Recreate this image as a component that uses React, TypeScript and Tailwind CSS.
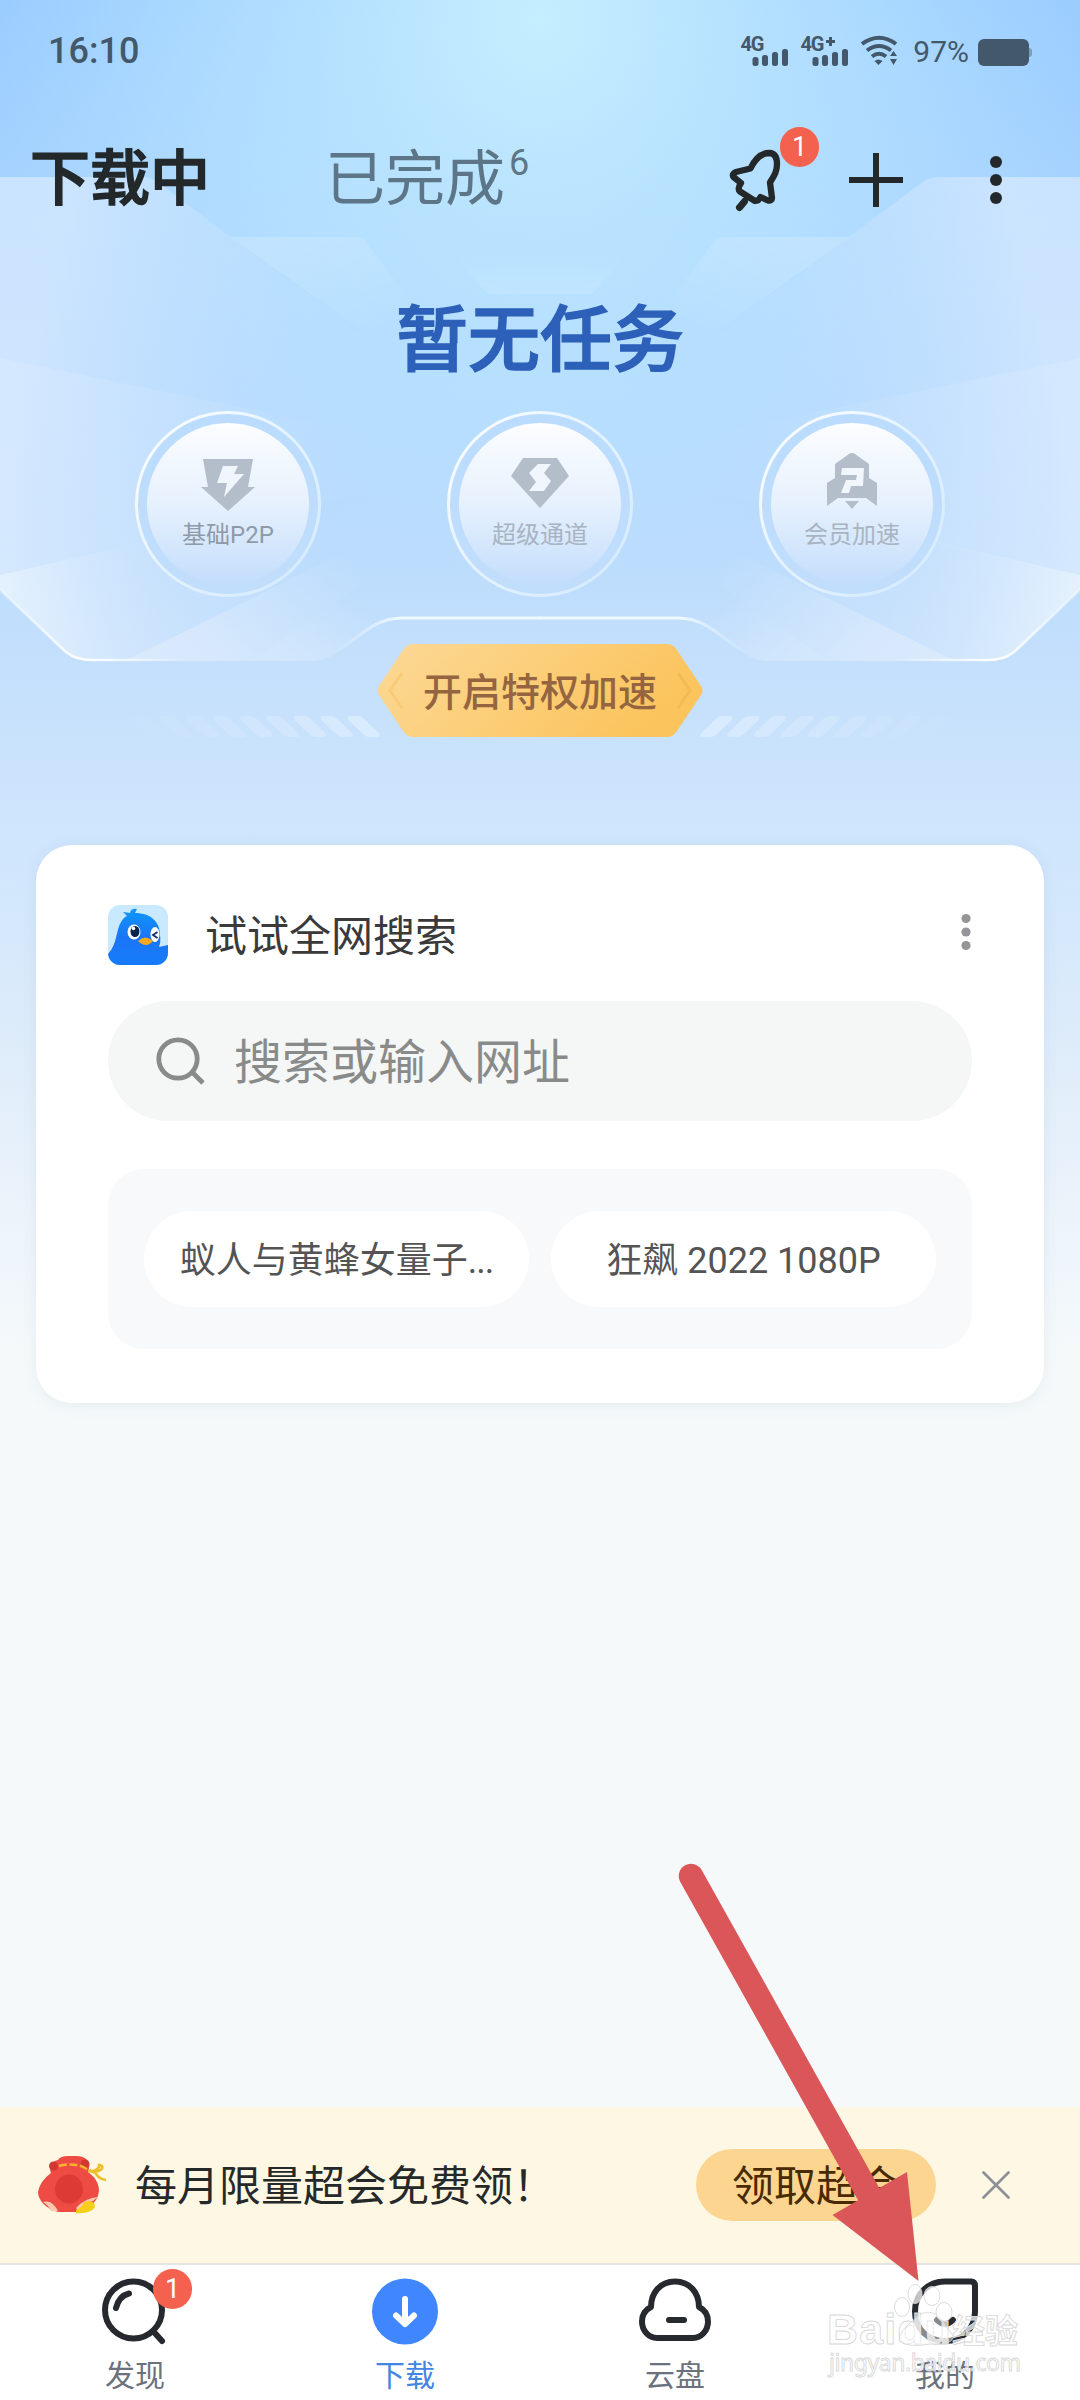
import React from "react";

const INK = "#23282b";

const HeroBackdrop: React.FC = () => {
  const half = (
    <>
      <path d="M0 177H143Q152 177 160 184L420 378L330 500L0 575Z" fill="url(#wing)" />
      <path d="M230 237H355Q362 237 366 242L440 340L413 366Z" fill="url(#fin)" />
      <path d="M448 250H540V294H492Q487 294 484 290Z" fill="url(#roof)" />
      <path d="M0 358L380 436L380 490L0 575Z" fill="url(#beam)" />
      <path
        d="M0 575L380 488L540 520V618H398C375 618 362 636 335 654Q324 661 312 661H92Q76 661 66 652L0 590Z"
        fill="url(#floor)"
      />
      <path d="M125 661L390 530V565L250 661Z" fill="url(#ray)" />
      <path d="M250 661L390 565V618C375 620 362 636 335 654Q324 661 312 661Z" fill="url(#lip)" />
      <path d="M0 590L66 652Q76 660 92 660H190" fill="none" stroke="url(#edge)" strokeWidth="2.6" />
      <path
        d="M335 653C362 635 375 618 402 618H541"
        fill="none"
        stroke="url(#edgeTop)"
        strokeWidth="3"
      />
    </>
  );

  return (
    <svg className="absolute left-0 top-0" width="1080" height="800" viewBox="0 0 1080 800">
      <defs>
        <linearGradient id="wing" gradientUnits="userSpaceOnUse" x1="40" y1="330" x2="400" y2="420">
          <stop offset="0" stopColor="#d9eaff" stopOpacity="0.7" />
          <stop offset="1" stopColor="#b9dcff" stopOpacity="0" />
        </linearGradient>
        <linearGradient id="fin" gradientUnits="userSpaceOnUse" x1="300" y1="237" x2="350" y2="345">
          <stop offset="0" stopColor="#ffffff" stopOpacity="0.18" />
          <stop offset="1" stopColor="#ffffff" stopOpacity="0" />
        </linearGradient>
        <linearGradient id="roof" x1="0" y1="0" x2="0" y2="1">
          <stop offset="0" stopColor="#ffffff" stopOpacity="0" />
          <stop offset="1" stopColor="#ffffff" stopOpacity="0.13" />
        </linearGradient>
        <linearGradient id="beam" gradientUnits="userSpaceOnUse" x1="0" y1="0" x2="380" y2="0">
          <stop offset="0" stopColor="#e0edff" stopOpacity="0.35" />
          <stop offset="1" stopColor="#d7e9ff" stopOpacity="0" />
        </linearGradient>
        <linearGradient id="floor" gradientUnits="userSpaceOnUse" x1="0" y1="600" x2="330" y2="560">
          <stop offset="0" stopColor="#eff7fe" stopOpacity="0.8" />
          <stop offset="0.5" stopColor="#d6e8fd" stopOpacity="0.4" />
          <stop offset="1" stopColor="#cfe5fd" stopOpacity="0" />
        </linearGradient>
        <linearGradient id="ray" gradientUnits="userSpaceOnUse" x1="210" y1="661" x2="340" y2="540">
          <stop offset="0" stopColor="#e3eefd" stopOpacity="0.55" />
          <stop offset="1" stopColor="#d8eafd" stopOpacity="0" />
        </linearGradient>
        <linearGradient id="lip" gradientUnits="userSpaceOnUse" x1="300" y1="665" x2="355" y2="600">
          <stop offset="0" stopColor="#dfedfd" stopOpacity="0.5" />
          <stop offset="1" stopColor="#dfedfd" stopOpacity="0" />
        </linearGradient>
        <linearGradient id="edge" gradientUnits="userSpaceOnUse" x1="0" y1="0" x2="190" y2="0">
          <stop offset="0" stopColor="#fff" stopOpacity="0.3" />
          <stop offset="0.45" stopColor="#fff" />
          <stop offset="1" stopColor="#fff" stopOpacity="0" />
        </linearGradient>
        <linearGradient id="edgeTop" gradientUnits="userSpaceOnUse" x1="335" y1="0" x2="400" y2="0">
          <stop offset="0" stopColor="#eef8ff" stopOpacity="0" />
          <stop offset="1" stopColor="#eef8ff" />
        </linearGradient>
      </defs>
      {half}
      <g transform="matrix(-1 0 0 1 1080 0)">{half}</g>
      {Array.from({ length: 10 }, (_, i) => (
        <g key={i} fill="#dcecfe" fillOpacity={0.85 * Math.pow(1 - i / 10, 1.3)}>
          <path
            transform={`translate(${-26.8 * i} 0)`}
            d="M350 716H358Q361 716 363 718L379 733Q381 737 377 737H370Q366 737 364 735L348 720Q346 716 350 716Z"
          />
          <path
            transform={`translate(${26.8 * i} 0)`}
            d="M730 716H722Q719 716 717 718L701 733Q699 737 703 737H710Q714 737 716 735L732 720Q734 716 730 716Z"
          />
        </g>
      ))}
    </svg>
  );
};

const SignalBars: React.FC<{ plus?: boolean }> = ({ plus }) => (
  <svg width="48" height="32" viewBox="0 0 48 32" fill="#43586a">
    <text x="0.5" y="16" fontSize="20" fontWeight="700" fontFamily="Roboto, sans-serif" textLength="24">
      4G
    </text>
    {plus && <path d="M26 5h3V2h3v3h3v3h-3v3h-3V8h-3z" />}
    <rect x="12.5" y="22" width="6" height="9" rx="2.5" />
    <rect x="22" y="20" width="6" height="11" rx="2.5" />
    <rect x="32" y="17" width="6" height="14" rx="2.5" />
    <rect x="42" y="14" width="6" height="17" rx="2.5" />
  </svg>
);

const StatusBar: React.FC = () => (
  <div className="relative flex h-[102px] shrink-0 items-center pl-[48px] pr-[48px] text-[#43586a]">
    <span className="text-[36px] font-medium leading-none">16:10</span>
    <div className="ml-auto flex items-center">
      <SignalBars />
      <div className="w-[12px]" />
      <SignalBars plus />
      <svg className="ml-[12px]" width="38" height="32" viewBox="0 0 38 32" fill="none" stroke="#43586a" strokeWidth="4">
        <path d="M2 9Q19 -3.5 36 9" />
        <path d="M7 15.5Q19 6.500 31 15.500" />
        <path d="M12 21.5Q19 16 26 21.500" />
        <path d="M14.500 26Q18.500 23 22.500 26L18.500 30Z" fill="#43586a" stroke="none" />
        <path d="M30 21l3.500-5 3.500 5zM30 24l3.500 6 3.500-6z" fill="#43586a" stroke="none" />
      </svg>
      <span className="ml-[15px] pt-[2px] text-[30px] leading-none">97%</span>
      <div className="ml-[9px] mt-[2px] h-[27px] w-[51px] rounded-[6px] bg-[#43586a]" />
      <div className="mt-[2px] h-[9px] w-[3px] rounded-r-sm bg-[#7b9cbd]" />
    </div>
  </div>
);

const Badge: React.FC<{ className: string }> = ({ className }) => (
  <span
    className={`absolute flex h-[40px] w-[39px] items-center justify-center rounded-full bg-[#f5614f] text-[27px] leading-none text-white ${className}`}
  >
    1
  </span>
);

const Header: React.FC = () => (
  <div className="relative flex h-[156px] shrink-0 items-center pl-[30px] pr-[78px]">
    <h1 className="text-[60px] font-medium leading-none text-[#23282b] [-webkit-text-stroke:1.500px_#23282b]">下载中</h1>
    <div className="ml-[115px] flex items-center text-[#5d7687]">
      <span className="text-[60px] leading-none">已完成</span>
      <span className="mb-[34px] ml-[4px] text-[36px] leading-none">6</span>
    </div>
    <div className="ml-auto flex items-center">
      <div className="relative">
        <svg width="54" height="66" viewBox="0 0 54 66" fill="none" stroke={INK} strokeWidth="6.300" strokeLinejoin="round" strokeLinecap="round">
          <path d="M21.500 21.500C26 12 33 6 40.500 6Q48 6.500 48 17C48 25 45 29 41 35.500L43 51Q43 54 39 53.500L31.500 50L29 53.500L26 54L11 44.500Q8 42 12 36L4.500 30Q2.500 27 7 25Z" />
          <path d="M15.500 54.500L10.500 60.500" strokeWidth="7" />
        </svg>
        <Badge className="-top-[20px] left-[51px]" />
      </div>
      <svg className="ml-[66px]" width="54" height="54" viewBox="0 0 54 54" stroke={INK} strokeWidth="6">
        <path d="M27 0V54M0 27H54" />
      </svg>
      <svg className="ml-[87px]" width="12" height="48" viewBox="0 0 12 48" fill={INK}>
        <circle cx="6" cy="6" r="6" />
        <circle cx="6" cy="24" r="6" />
        <circle cx="6" cy="42" r="6" />
      </svg>
    </div>
  </div>
);

const boosts = [
  {
    label: "基础P2P",
    tone: "text-[#8f9aa8]",
    icon: (
      <>
        <path d="M5 6H55L50 34H57L30 58L3 34H10Z" />
        <path d="M25 13H40L36 21H46L26 44L29 30H19Z" fill="#f1f6fd" />
      </>
    ),
  },
  {
    label: "超级通道",
    tone: "text-[#a9b4c2]",
    icon: (
      <>
        <path d="M13 5H47L59 23L30 55L1 23Z" />
        <path d="M28 11H41L34 20L41 28L34 38H19L26 29L19 20Z" fill="#f1f6fd" />
      </>
    ),
  },
  {
    label: "会员加速",
    tone: "text-[#a9b4c2]",
    icon: (
      <>
        <path d="M27 1Q30 -1 33 1L47 11V25L55 30V53L44 45H16L5 53V30L13 25V11Z" />
        <path d="M20 15H42L41 33H29L27 40H19L24 27H34L35 22H19Z" fill="#f1f6fd" />
        <path d="M23 48H37L30 56Z" />
      </>
    ),
  },
];

const BoostCircles: React.FC = () => (
  <div className="relative flex h-[186px] shrink-0 justify-center gap-[126px]">
    {boosts.map((b) => (
      <div
        key={b.label}
        className="h-[186px] w-[186px] rounded-full bg-linear-to-br from-white via-[#e3f2ff] to-[#d3eaff] p-[3px]"
      >
        <div className="flex h-full w-full items-center justify-center rounded-full bg-linear-to-b from-[#bbdcfe] to-[#c1defc]">
          <div className="flex h-[162px] w-[162px] flex-col items-center rounded-full bg-linear-to-b from-[#fcfdff] via-[#e6f1fd] to-[#c3ddfc] pt-[30px]">
            <svg width="60" height="58" viewBox="0 0 60 58" fill="#b4becb">
              {b.icon}
            </svg>
            <span className={`mt-[12px] text-[24px] leading-none ${b.tone}`}>{b.label}</span>
          </div>
        </div>
      </div>
    ))}
  </div>
);

const BoostButton: React.FC = () => (
  <button className="relative mx-auto mt-[47px] flex h-[93px] w-[328px] shrink-0 items-center justify-center">
    <svg className="absolute inset-0" width="328" height="93" viewBox="0 0 328 93" fill="none">
      <defs>
        <linearGradient id="gold" x1="0" y1="0" x2="1" y2="0.3">
          <stop offset="0" stopColor="#fcd997" />
          <stop offset="1" stopColor="#fbc45d" />
        </linearGradient>
      </defs>
      <path
        d="M37 0H291Q297 0 301 6L325 42Q328 46.500 325 51L301 87Q297 93 291 93H37Q31 93 27 87L3 51Q0 46.500 3 42L27 6Q31 0 37 0Z"
        fill="url(#gold)"
      />
      <path d="M26 29L14 46.500L26 64" stroke="#f9cb76" strokeWidth="3" />
      <path d="M302 29L314 46.500L302 64" stroke="#f3bb55" strokeWidth="3" />
    </svg>
    <span className="relative pt-[5px] text-[39px] font-medium leading-none text-[#946540]">开启特权加速</span>
  </button>
);

const SearchCard: React.FC = () => (
  <div className="relative mx-[36px] mt-[108px] flex h-[558px] shrink-0 flex-col rounded-[36px] bg-white px-[72px] pt-[60px] shadow-[0_2px_16px_rgba(80,110,140,0.09)]">
    <div className="flex h-[60px] items-center">
      <svg width="60" height="60" viewBox="0 0 60 60">
        <defs>
          <clipPath id="tile">
            <rect width="60" height="60" rx="12" />
          </clipPath>
          <linearGradient id="bird" x1="0" y1="0" x2="0" y2="1">
            <stop offset="0" stopColor="#0c97fb" />
            <stop offset="0.5" stopColor="#1b76f6" />
            <stop offset="1" stopColor="#167bfa" />
          </linearGradient>
        </defs>
        <g clipPath="url(#tile)">
          <rect width="60" height="60" fill="#c8e9fe" />
          <path
            d="M0 49C9 40 8 25 13 17Q16 12 19 11L15 7L22 8Q23 3 29 4L27 8C43 8 52 17 52 30Q53 37 51 42L60 40V60H0Z"
            fill="url(#bird)"
          />
          <ellipse cx="26" cy="27" rx="6.500" ry="7.500" fill="#fff" />
          <ellipse cx="27" cy="26.500" rx="4.500" ry="5.500" fill="#06244d" />
          <circle cx="25.500" cy="23.500" r="1.800" fill="#fff" />
          <ellipse cx="47" cy="29.500" rx="4.500" ry="7.500" fill="#fff" />
          <path d="M49.500 27L45 30L49.500 33" fill="none" stroke="#12305c" strokeWidth="1.800" />
          <path d="M30 36Q37 29 45 36Q38 44 30 36Z" fill="#f6a91b" />
        </g>
      </svg>
      <span className="ml-[37px] pt-[4px] text-[42px] leading-none text-[#3a3a3a]">试试全网搜索</span>
      <svg className="mb-[6px] ml-auto" width="12" height="38" viewBox="0 0 12 38" fill="#939598">
        <circle cx="6" cy="5.500" r="4.600" />
        <circle cx="6" cy="19" r="4.600" />
        <circle cx="6" cy="32.500" r="4.600" />
      </svg>
    </div>
    <div className="mt-[36px] flex h-[120px] items-center rounded-full bg-[#f5f7f7] pl-[48px]">
      <svg width="50" height="50" viewBox="0 0 50 50" fill="none" stroke="#888b89" strokeWidth="4.800">
        <circle cx="22" cy="23" r="19.200" />
        <path d="M36 36L47 47" />
      </svg>
      <span className="ml-[28px] pt-[3px] text-[48px] leading-none text-[#898b8a]">搜索或输入网址</span>
    </div>
    <div className="mt-[48px] flex h-[180px] items-center gap-[22px] rounded-[36px] bg-[#f8f9fb] px-[36px] text-[36px] text-[#545454]">
      <div className="flex h-[96px] flex-1 items-center justify-center rounded-full bg-white pt-[4px] leading-none">
        蚁人与黄蜂女量子<span className="font-['Roboto'] tracking-[-1px]">...</span>
      </div>
      <div className="flex h-[96px] flex-1 items-center justify-center rounded-full bg-white pt-[4px] leading-none">
        狂飙 2022 1080P
      </div>
    </div>
  </div>
);

const Banner: React.FC = () => (
  <div className="relative flex h-[158px] shrink-0 items-center border-b-2 border-[#e3e5e1] bg-[#fef7e3] pl-[38px] pr-[70px]">
    <svg width="70" height="60" viewBox="0 0 70 60">
      <path d="M20 5Q22 1 30 1H38Q46 1 49 5Q53 9 50 17C57 22 61 28 61 36Q60 46 51 52L44 57H20C8 54 0 45 0 37Q2 26 13 18Q9 8 20 5Z" fill="#ee4b44" />
      <circle cx="15.500" cy="11" r="4.500" fill="#d23832" />
      <circle cx="47" cy="9" r="4.500" fill="#d23832" />
      <ellipse cx="31" cy="34" rx="14" ry="14.500" fill="#de3a35" />
      <path d="M21 11Q32 8 43 11L57 18" fill="none" stroke="#f7b42c" strokeWidth="2.500" strokeDasharray="8 2.500" />
      <path d="M50 16Q58 17 61 12Q60 8 64 11Q66 15 57 17Q60 24 68 25" fill="none" stroke="#ebc02d" strokeWidth="2.600" />
      <path d="M5 47Q14 44 20 56L13 56Q10 50 5 47ZM38 53Q47 43 60 42L55 46Q46 47 41 57Z" fill="#f8c9ae" />
      <path d="M38 55Q45 52 46 47Q57 44 57 52Q53 59 38 58Z" fill="#f7cf19" />
    </svg>
    <span className="ml-[27px] pt-[4px] text-[42px] leading-none text-[#26292a]">每月限量超会免费领！</span>
    <div className="ml-auto flex items-center">
      <button className="flex h-[72px] w-[240px] items-center justify-center rounded-full bg-[#fcd690] pt-[3px] text-[42px] leading-none text-[#4a2a02]">
        领取超会
      </button>
      <svg className="ml-[46px]" width="28" height="28" viewBox="0 0 28 28" stroke="#8b9097" strokeWidth="2.600" strokeLinecap="round">
        <path d="M1.500 1.500L26.500 26.500M26.500 1.500L1.500 26.500" />
      </svg>
    </div>
  </div>
);

const tabs = [
  {
    label: "发现",
    color: "text-[#6b727d]",
    badge: true,
    icon: (
      <>
        <circle cx="34.500" cy="34" r="28.500" />
        <path d="M54 55L63 65M17 32Q20 20 30 17.500" />
      </>
    ),
  },
  {
    label: "下载",
    color: "text-[#4385e2]",
    icon: (
      <>
        <circle cx="36" cy="35.500" r="33" fill="#4086ff" stroke="none" />
        <path d="M36 23V48M27 39.500L36 48L45 39.500" stroke="#fff" />
      </>
    ),
  },
  {
    label: "云盘",
    color: "text-[#6b727d]",
    icon: (
      <>
        <path d="M12 31C12 17 21 5.500 36 5.500S60 17 60 31C66 34 69 39 69 45.500C69 55 62 62 54 62H18C10 62 3 55 3 45.500C3 39 6 34 12 31Z" />
        <path d="M30 44H45" />
      </>
    ),
  },
  {
    label: "我的",
    color: "text-[#6b727d]",
    icon: (
      <>
        <path d="M36 5.500H62Q66 5.500 66 10V35.500C66 53 53 65 36 65S6 53 6 35.500S19 5.500 36 5.500Z" />
        <path d="M28 44Q36 52 44 44" />
      </>
    ),
  },
];

const TabBar: React.FC = () => (
  <div className="grid h-[135px] shrink-0 grid-cols-4 bg-white">
    {tabs.map((t) => (
      <div key={t.label} className={`flex flex-col items-center pt-[11px] ${t.color}`}>
        <div className="relative">
          <svg width="72" height="70" viewBox="0 0 72 70" fill="none" stroke="#262a2e" strokeWidth="6" strokeLinecap="round" strokeLinejoin="round">
            {t.icon}
          </svg>
          {t.badge && <Badge className="-top-[7px] left-[54px]" />}
        </div>
        <span className="mt-[15px] text-[30px] leading-none">{t.label}</span>
      </div>
    ))}
  </div>
);

const Watermark: React.FC = () => (
  <svg
    className="absolute bottom-[14px] right-[54px]"
    width="206"
    height="110"
    viewBox="820 2276 206 110"
    fill="#fff"
    fillOpacity="0.72"
    stroke="#d8d8d8"
    strokeWidth="0.9"
  >
    <text x="827" y="2344" fontSize="43" fontWeight="700" fontFamily="Liberation Sans, sans-serif" textLength="124">
      Baidu
    </text>
    <text x="952" y="2343" fontSize="33" fontWeight="700" fontFamily="Noto Sans CJK SC, sans-serif">
      经验
    </text>
    <text x="829" y="2371" fontSize="23" fontWeight="400" fontFamily="Noto Sans, sans-serif" textLength="192">
      jingyan.baidu.com
    </text>
    <path d="M916 2318C926 2308 938 2312 944 2324L954 2337Q949 2347 930 2344Q908 2348 899 2341Q898 2332 916 2318Z" fillOpacity="0.45" />
    <ellipse cx="902" cy="2307" rx="7.500" ry="9.500" />
    <ellipse cx="915" cy="2294" rx="7" ry="9.500" />
    <ellipse cx="932" cy="2296" rx="8" ry="9.500" />
    <ellipse cx="944" cy="2312" rx="8" ry="9.500" />
  </svg>
);

const PointerArrow: React.FC = () => (
  <svg className="absolute left-[670px] top-[1850px]" width="260" height="440" viewBox="670 1850 260 440" fill="#da5659">
    <path d="M691 1876L872 2200" stroke="#da5659" strokeWidth="24.500" strokeLinecap="round" />
    <path d="M907 2172L832.500 2215L918.500 2281Z" />
  </svg>
);

const App: React.FC = () => {
  return (
    <div className="relative flex h-[2400px] w-[1080px] flex-col overflow-hidden bg-[#f5f9fa] font-['Roboto','Noto_Sans_CJK_SC',sans-serif]">
      <div className="absolute inset-x-0 top-0 h-[1400px] bg-[linear-gradient(180deg,#98cbff_0px,#aed7ff_300px,#b9dbfd_520px,#c5e0fc_680px,#d0e6fd_850px,#dcebfa_1020px,#ebf3fb_1200px,#f5f9fa_1350px)]" />
      <div className="absolute inset-x-0 top-0 h-[700px] bg-[radial-gradient(ellipse_560px_560px_at_540px_20px,#c5eeff_0%,rgba(190,232,255,0.72)_40%,rgba(185,222,255,0)_100%)]" />
      <HeroBackdrop />
      <StatusBar />
      <Header />
      <div className="relative flex h-[153px] shrink-0 items-center justify-center pt-[12px]">
        <h2 className="text-[72px] font-medium leading-none text-[#2d60b9] [-webkit-text-stroke:1.500px_#2d60b9]">暂无任务</h2>
      </div>
      <BoostCircles />
      <BoostButton />
      <SearchCard />
      <div className="flex-1" />
      <Banner />
      <TabBar />
      <PointerArrow />
      <Watermark />
    </div>
  );
};

export default App;
